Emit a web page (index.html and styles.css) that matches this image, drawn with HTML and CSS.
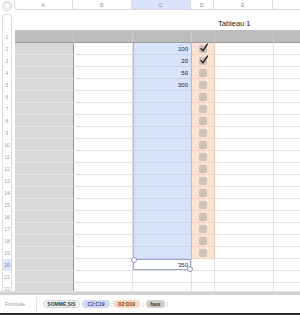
FILE: index.html
```html
<!DOCTYPE html>
<html lang="fr">
<head>
    <meta charset="UTF-8">
    <meta name="viewport" content="width=device-width, initial-scale=1.0">
    <title>Tableau 1</title>
    <link rel="stylesheet" href="styles.css">
</head>
<body>
<div class="app">
    <div class="colbar">
        <div class="corner"><span class="ring"></span></div>
        <div class="heads">
            <div class="head w-a">A</div>
            <div class="head w-b">B</div>
            <div class="head w-c active">C</div>
            <div class="head w-d">D</div>
            <div class="head w-e">E</div>
            <div class="head w-f"></div>
        </div>
    </div>

    <div class="main">
        <div class="rail" id="rail"></div>
        <div class="sheet">
            <div class="title">Tableau 1</div>
            <div class="table" id="table"></div>
        </div>
    </div>

    <div class="splitter"></div>

    <div class="formula">
        <span class="label">Formule</span>
        <div class="tokens">
            <span class="tok fn">SOMME.SIS</span>
            <span class="tok ref-c">C2:C19</span>
            <span class="sep">;</span>
            <span class="tok ref-d">D2:D19</span>
            <span class="sep wide">;</span>
            <span class="tok bool">faux</span>
            <span class="paren">)</span>
        </div>
    </div>
</div>

<script>
    // Valeurs de la colonne C et cases cochées de la colonne D
    const values = { 2: 100, 3: 20, 4: 50, 5: 300 };
    const checked = [2, 3];
    const checkSvg = '<svg class="tick" viewBox="0 0 10 10" width="10" height="10">' +
        '<path d="M2 5.6 L4 7.8 L8.4 1.2" fill="none" stroke="#1e1e1e" stroke-width="1.4" stroke-linecap="round" stroke-linejoin="round"/></svg>';

    const rail = document.getElementById('rail');
    const table = document.getElementById('table');

    for (let r = 1; r <= 22; r++) {
        const num = document.createElement('div');
        num.className = 'num' + (r === 1 ? ' first' : '') + (r === 20 ? ' current' : '');
        num.textContent = r;
        rail.appendChild(num);

        const inRange = r >= 2 && r <= 19;
        let c = '';
        let d = '';
        if (inRange) {
            c = values[r] || '';
            d = '<span class="box">' + (checked.includes(r) ? checkSvg : '') + '</span>';
        }
        if (r === 20) c = 350;

        const row = document.createElement('div');
        row.className = 'row' + (r === 1 ? ' header' : '');
        row.innerHTML = `
            <div class="cell a"></div>
            <div class="cell b"></div>
            <div class="cell c${inRange ? ' sel' : ''}${r === 20 ? ' current' : ''}">${c}</div>
            <div class="cell d${inRange ? ' cond' : ''}">${d}</div>
            <div class="cell e"></div>
            <div class="cell f"></div>`;
        table.appendChild(row);
    }
</script>
</body>
</html>
```

FILE: styles.css
```css
* {
    box-sizing: border-box;
    margin: 0;
    padding: 0;
}

body {
    width: 300px;
    height: 315px;
    overflow: hidden;
    background: #fff;
    font-family: 'Liberation Sans', Arial, sans-serif;
    color: #222;
}

.app {
    display: flex;
    flex-direction: column;
    height: 315px;
}

/* Column headers */
.colbar {
    display: flex;
    height: 11px;
    flex-shrink: 0;
}

.corner {
    width: 15px;
    display: flex;
    align-items: center;
    padding-left: 2px;
}

.ring {
    width: 10px;
    height: 10px;
    border-radius: 50%;
    border: 1px solid #cfcfcf;
    display: flex;
    align-items: center;
    justify-content: center;
}

.ring::after {
    content: '';
    width: 5px;
    height: 5px;
    border-radius: 50%;
    border: 1px solid #d8d8d8;
}

.heads {
    display: flex;
    height: 14px;
    margin-top: -4px;
    border: 1px solid #d8d8d8;
    border-right: none;
    border-radius: 4px 0 0 4px;
    overflow: hidden;
}

.head {
    flex-shrink: 0;
    display: flex;
    align-items: center;
    justify-content: center;
    padding-top: 4px;
    font-size: 5px;
    color: #8c8c8c;
    border-right: 1px solid #dedede;
}

.head.active {
    background: #d9e2f9;
    color: #7088c4;
}

.w-a, .w-b, .w-c, .w-e, .w-f { width: 59px; }
.w-a { width: 58px; }
.w-d { width: 23px; }

/* Sheet */
.main {
    display: flex;
    height: 280px;
    flex-shrink: 0;
    overflow: hidden;
}

.rail {
    width: 10px;
    margin: 3px 3px 0 2px;
    padding-top: 15px;
    border: 1px solid #dedede;
    border-bottom: none;
    border-radius: 3px 3px 0 0;
    flex-shrink: 0;
}

.num {
    height: 12px;
    display: flex;
    align-items: center;
    justify-content: center;
    font-size: 5px;
    color: #9a9a9a;
}

.num.first {
    height: 13px;
}

.num.current {
    background: #dde6fb;
    color: #6a84c6;
}

.sheet {
    flex: 1;
    display: flex;
    flex-direction: column;
}

.title {
    height: 19px;
    flex-shrink: 0;
    padding: 8px 0 0 203px;
    font-size: 7.5px;
    line-height: 9px;
    color: #1d1d1d;
    white-space: nowrap;
}

.table {
    display: flex;
    flex-direction: column;
}

.row {
    display: flex;
    height: 12px;
    flex-shrink: 0;
}

.row.header {
    height: 13px;
}

.cell {
    flex-shrink: 0;
    height: 100%;
    display: flex;
    align-items: center;
    justify-content: flex-end;
    padding-right: 3px;
    font-size: 6px;
    color: #1f1f1f;
    border-right: 1px solid #e1e1e1;
    border-bottom: 1px solid #e1e1e1;
}

.a, .b, .c, .e, .f { width: 59px; }
.d { width: 23px; }

.a {
    background: #d9d9d9;
    border-right-color: #999;
    border-bottom-color: #e8e8e8;
}

.row.header .cell {
    background: #bdbdbd;
    border-right-color: #cbcbcb;
    border-bottom-color: #9d9d9d;
}

.c.sel {
    background: #d8e2f9;
    border-right-color: #a8bae7;
    border-bottom-color: #c6d2f1;
    box-shadow: inset 1px 0 0 #a8bae7;
}

.d.cond {
    justify-content: center;
    padding: 0;
    background: #fbe4d5;
    border-right-color: #efc7aa;
    border-bottom-color: #f2d6c3;
}

.box {
    position: relative;
    width: 8px;
    height: 8px;
    border-radius: 1.5px;
    background: #cfc1b8;
}

.tick {
    position: absolute;
    left: 0;
    top: -2px;
}

.c.current {
    position: relative;
    background: #fff;
    box-shadow: inset 0 0 0 1px #98a7c9;
}

.c.current::before,
.c.current::after {
    content: '';
    position: absolute;
    width: 4px;
    height: 4px;
    border-radius: 50%;
    background: #fff;
    border: 1px solid #8797bf;
}

.c.current::before {
    left: -2px;
    top: -2px;
}

.c.current::after {
    right: -2px;
    bottom: -2px;
}

/* Formula bar */
.splitter {
    height: 4px;
    flex-shrink: 0;
    background: #d2d2d2;
    border-top: 1px solid #e2e2e2;
}

.formula {
    height: 20px;
    flex-shrink: 0;
    display: flex;
    align-items: center;
    border-bottom: 2px solid #2d2d2d;
}

.label {
    width: 37px;
    height: 15px;
    display: flex;
    align-items: center;
    padding-left: 5px;
    font-size: 5.5px;
    color: #9a9a9a;
    border-right: 1px solid #e2e2e2;
}

.tokens {
    display: flex;
    align-items: center;
    padding-left: 6px;
}

.tok {
    height: 8px;
    border-radius: 4px;
    display: flex;
    align-items: center;
    justify-content: center;
    font-size: 5px;
    font-weight: bold;
    color: #333;
}

.fn {
    width: 37px;
    background: #f5f5f5;
    border: 1px solid #d2d2d2;
}

.ref-c {
    width: 28px;
    margin-left: 2px;
    background: #cfdaf6;
    color: #3c4f80;
}

.ref-d {
    width: 27px;
    background: #f8d9c4;
    color: #6d4630;
}

.bool {
    width: 19px;
    background: #cecece;
}

.sep {
    width: 3px;
    text-align: center;
    font-size: 6px;
    color: #777;
}

.sep.wide {
    width: 6px;
}

.paren {
    margin-left: 1px;
    font-size: 6px;
    color: #c4c4c4;
}
```
